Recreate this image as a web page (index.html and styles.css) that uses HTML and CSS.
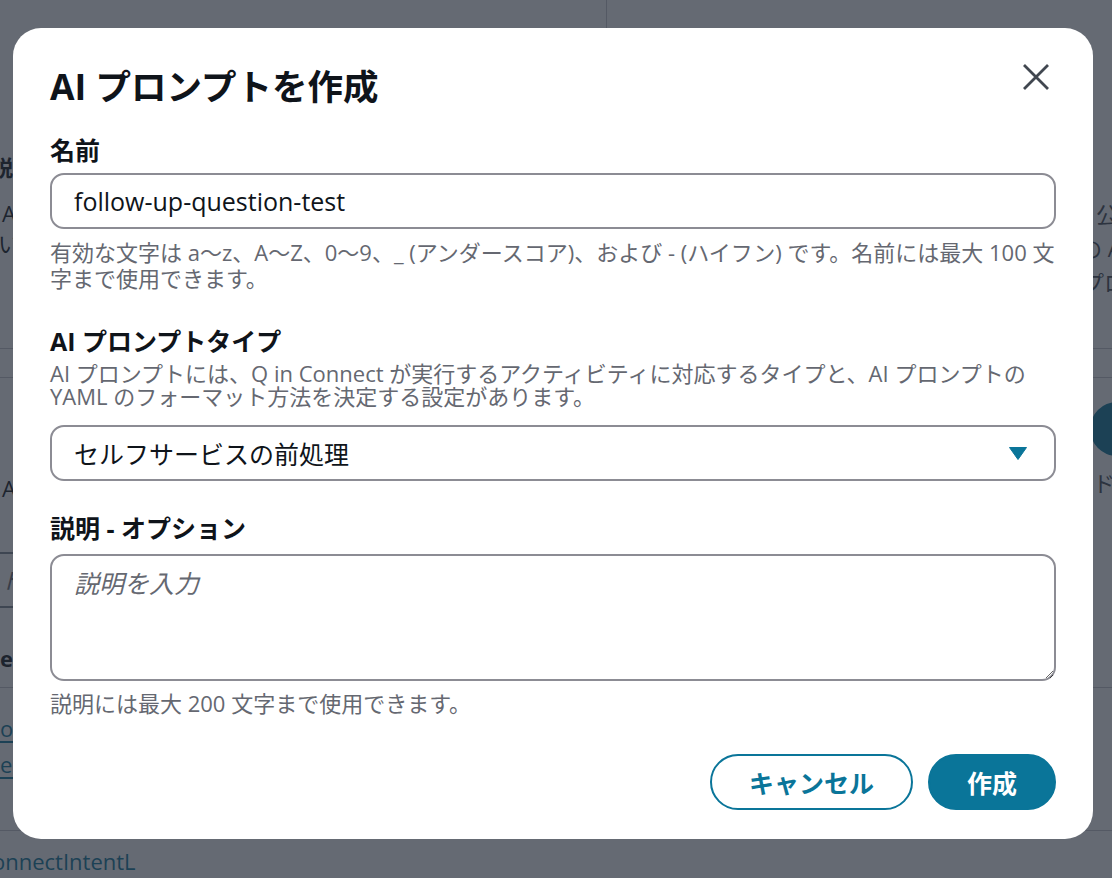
FILE: index.html
```html
<!DOCTYPE html>
<html lang="ja">
<head>
<meta charset="utf-8">
<title>AI プロンプトを作成</title>
<link rel="stylesheet" href="styles.css">
</head>
<body>
<div class="page">
  <div class="bg-head"><div class="bg-split"></div></div>
  <div class="bg-info">
    <div class="bg-left bg-info-left">
      <div class="bg-strong bg-cut">説明</div>
      <div class="bg-a">AI プロンプト</div>
      <div class="bg-i">いつ</div>
    </div>
    <div class="bg-right bg-info-right">
      <div class="bg-r1">公開</div>
      <div class="bg-r2">の AI</div>
      <div class="bg-r3">プロンプト</div>
    </div>
  </div>
  <div class="bg-band"></div>
  <div class="bg-sec">
    <div class="bg-left bg-sec-left"><div class="bg-a">AI</div></div>
    <div class="bg-right bg-sec-right">
      <div class="bg-btn"></div>
      <div class="bg-do">ドラフト</div>
    </div>
  </div>
  <div class="bg-search"><div class="bg-search-box">ト</div></div>
  <div class="bg-namehdr"><div class="bg-strong">e</div></div>
  <div class="bg-links">
    <a class="bg-link">on</a>
    <a class="bg-link">en</a>
  </div>
  <div class="bg-foot"><a class="bg-link-plain">onnectIntentL</a></div>
</div>

<div class="overlay">
  <div class="modal" role="dialog" aria-labelledby="modal-title">
    <div class="modal-header">
      <h2 class="modal-title" id="modal-title">AI プロンプトを作成</h2>
      <button class="close-btn" aria-label="閉じる">
        <svg viewBox="0 0 28 28" width="28" height="28"><path d="M2 2 L26 26 M26 2 L2 26"/></svg>
      </button>
    </div>

    <div class="field">
      <label class="label">名前</label>
      <input class="text-input" type="text" value="follow-up-question-test">
      <p class="constraint">有効な文字は a〜z、A〜Z、0〜9、_ (アンダースコア)、および - (ハイフン) です。名前には最大 100 文字まで使用できます。</p>
    </div>

    <div class="field field-type">
      <label class="label">AI プロンプトタイプ</label>
      <p class="description">AI プロンプトには、Q in Connect が実行するアクティビティに対応するタイプと、AI プロンプトの YAML のフォーマット方法を決定する設定があります。</p>
      <div class="select">
        <span class="select-value">セルフサービスの前処理</span>
        <svg class="select-caret" viewBox="0 0 18 13" width="18" height="13"><path d="M0.5 0.5 H17.5 L9 12.5 Z"/></svg>
      </div>
    </div>

    <div class="field field-desc">
      <label class="label">説明 - オプション</label>
      <textarea class="textarea" placeholder="説明を入力"></textarea>
      <p class="constraint constraint-desc">説明には最大 200 文字まで使用できます。</p>
    </div>

    <div class="modal-footer">
      <button class="btn btn-normal">キャンセル</button>
      <button class="btn btn-primary">作成</button>
    </div>
  </div>
</div>
</body>
</html>
```

FILE: styles.css
```css
* { box-sizing: border-box; }

html, body {
  margin: 0;
  padding: 0;
}

body {
  width: 1112px;
  height: 878px;
  overflow: hidden;
  background: #ffffff;
  color: #0f141a;
  font-family: "Open Sans", "Noto Sans CJK JP", sans-serif;
}

/* ---------- background page (behind the overlay) ---------- */
.page {
  width: 1112px;
  font-size: 22px;
  color: #0f141a;
  overflow: hidden;
}

.bg-head {
  height: 150px;
}

.bg-split {
  width: 607px;
  height: 100%;
  border-right: 1px solid #c6c6cd;
}

.bg-info {
  height: 199px;
  border-bottom: 1px solid #c6c6cd;
  display: flex;
  justify-content: space-between;
}

.bg-left {
  display: flex;
  flex-direction: column;
  white-space: nowrap;
}

.bg-right {
  width: 200px;
  margin-right: -168px;
  display: flex;
  flex-direction: column;
  white-space: nowrap;
  color: #414750;
}

.bg-info-left {
  padding-top: 2px;
  line-height: 30px;
}

.bg-cut { margin-left: -9px; }
.bg-a { margin-top: 16px; margin-left: 2px; }
.bg-i { margin-left: -2px; }

.bg-strong { font-weight: 700; }

.bg-info-right {
  padding-top: 47px;
  line-height: 34px;
}

.bg-r1 { margin-left: 16px; }
.bg-r2 { margin-left: 0; }
.bg-r3 { margin-left: 2px; }

.bg-band {
  height: 29px;
  border-bottom: 1px solid #c6c6cd;
}

.bg-sec {
  height: 170px;
  display: flex;
  justify-content: space-between;
}

.bg-sec-left {
  padding-top: 95px;
  line-height: 30px;
}

.bg-sec-left .bg-a { margin-top: 0; }

.bg-sec-right {
  padding-top: 24px;
}

.bg-btn {
  margin-left: 10px;
  width: 160px;
  height: 54px;
  border-radius: 27px;
  background: #0a7599;
}

.bg-do {
  margin-top: 12px;
  margin-left: 13px;
  line-height: 30px;
}

.bg-search {
  height: 60px;
  padding-top: 4px;
}

.bg-search-box {
  margin-left: -20px;
  width: 220px;
  height: 56px;
  border: 2px solid #7d8590;
  border-radius: 14px;
  padding-left: 18px;
  line-height: 52px;
  font-style: italic;
  color: #656871;
}

.bg-namehdr {
  height: 80px;
  border-bottom: 1px solid #c6c6cd;
  padding-top: 35px;
  line-height: 30px;
}

.bg-links {
  height: 143px;
  border-bottom: 1px solid #c6c6cd;
  padding-top: 22px;
  display: flex;
  flex-direction: column;
  align-items: flex-start;
  line-height: 36px;
}

.bg-link {
  color: #0a7599;
  text-decoration: underline;
  text-underline-offset: 4px;
}

.bg-foot {
  padding-top: 14px;
  line-height: 32px;
}

.bg-link-plain {
  margin-left: -8px;
  color: #0a7599;
  display: inline-block;
}

/* ---------- overlay + modal ---------- */
.overlay {
  position: fixed;
  inset: 0;
  background: rgba(35, 43, 55, 0.7);
  padding: 28px 19px 0 13px;
}

.modal {
  width: 1080px;
  background: #ffffff;
  border-radius: 28px;
  padding: 37px 37px 29px 37px;
  display: flex;
  flex-direction: column;
}

.modal-header {
  display: flex;
  justify-content: space-between;
  align-items: flex-start;
  margin-bottom: 26px;
}

.modal-title {
  margin: 0;
  font-size: 35.5px;
  line-height: 42px;
  font-weight: 700;
  color: #0f141a;
}

.close-btn {
  border: 0;
  background: none;
  padding: 0;
  width: 28px;
  height: 28px;
  margin-top: -2px;
  margin-right: 6px;
  cursor: pointer;
}

.close-btn svg {
  display: block;
  fill: none;
  stroke: #414750;
  stroke-width: 2.8;
  stroke-linecap: butt;
}

.field {
  display: flex;
  flex-direction: column;
}

.label {
  font-size: 25px;
  line-height: 35px;
  font-weight: 700;
  color: #0f141a;
}

.text-input {
  margin-top: 5px;
  width: 100%;
  height: 56px;
  border: 2px solid #8c8c94;
  border-radius: 14px;
  padding: 0 22px;
  font-family: inherit;
  font-size: 25px;
  color: #0f141a;
  background: #ffffff;
  outline: none;
}

.constraint {
  margin: 10px 0 0;
  font-size: 22px;
  line-height: 26px;
  color: #656871;
}

.field-type {
  margin-top: 33px;
}

.description {
  margin: 3px 0 0;
  font-size: 22px;
  line-height: 23px;
  color: #656871;
}

.select {
  margin-top: 17px;
  height: 56px;
  border: 2px solid #8c8c94;
  border-radius: 14px;
  padding: 0 27px 0 22px;
  display: flex;
  align-items: center;
  justify-content: space-between;
  font-size: 25px;
  color: #0f141a;
}

.select-caret {
  display: block;
  fill: #0a7599;
  stroke: #0a7599;
  stroke-width: 1;
  stroke-linejoin: round;
}

.field-desc {
  margin-top: 30px;
}

.textarea {
  margin-top: 8px;
  width: 100%;
  height: 127px;
  border: 2px solid #8c8c94;
  border-radius: 14px;
  padding: 10px 22px;
  font-family: inherit;
  font-size: 25px;
  line-height: 35px;
  color: #0f141a;
  resize: vertical;
  outline: none;
  display: block;
}

.textarea::placeholder {
  color: #656871;
  font-style: italic;
  opacity: 1;
}

.constraint-desc {
  margin-top: 9px;
}

.modal-footer {
  margin-top: 38px;
  display: flex;
  justify-content: flex-end;
  gap: 15px;
}

.btn {
  height: 56px;
  border-radius: 28px;
  border: 2px solid #0a7599;
  padding: 0 37px;
  font-family: inherit;
  font-size: 25px;
  font-weight: 700;
  cursor: pointer;
}

.btn-normal {
  background: #ffffff;
  color: #0a7599;
}

.btn-primary {
  background: #0a7599;
  color: #ffffff;
}
```
